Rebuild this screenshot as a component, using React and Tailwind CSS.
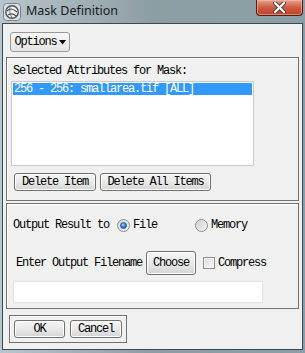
import React from "react";

const mono = { fontFamily: '"Liberation Mono", monospace' };

function Btn({ children, className = "" }) {
  return (
    <div
      className={
        "flex items-center justify-center rounded-[3px] border border-[#707070] bg-gradient-to-b from-[#f5f5f5] via-[#e9e9e9] to-[#d4d4d4] text-[12px] tracking-[-1.2px] text-black shadow-[inset_0_0_0_1px_#fcfcfc] " +
        className
      }
    >
      {children}
    </div>
  );
}

function Radio({ checked }) {
  return (
    <div className="flex h-[13px] w-[13px] items-center justify-center rounded-full border border-[#8a8a8a] bg-gradient-to-br from-[#d8d8d8] to-[#f8f8f8]">
      {checked ? (
        <div className="h-[7px] w-[7px] rounded-full border border-[#1c4f8a] bg-[radial-gradient(circle_at_40%_35%,#9fd8ff,#2a7bd4_55%,#0f4fa0)]" />
      ) : (
        <div className="h-[9px] w-[9px] rounded-full bg-gradient-to-br from-[#cfcfcf] to-[#f4f4f4]" />
      )}
    </div>
  );
}

export default function App() {
  return (
    <div
      className="flex h-[353px] w-[305px] flex-col bg-gradient-to-r from-[#b9c6cc] via-[#8d9ea3] to-[#8aa0a6]"
      style={mono}
    >
      {/* title bar */}
      <div className="relative flex h-[23px] items-center pl-[3px]">
        <svg width="18" height="18" viewBox="0 0 18 18">
          <rect x="0.5" y="0.5" width="17" height="17" rx="3" fill="#d9dee2" stroke="#7c8488" />
          <circle cx="9" cy="9" r="6.2" fill="#eef1f3" stroke="#4a5358" strokeWidth="1.4" />
          <path d="M4 8 C7 5 11 6 14 9" fill="none" stroke="#4a5358" strokeWidth="1.2" />
          <path d="M5 12 C8 10 11 11 13 13" fill="none" stroke="#4a5358" strokeWidth="1.1" />
          <path d="M7 4 C6 7 7 11 9 15" fill="none" stroke="#6a7378" strokeWidth="0.9" />
        </svg>
        <span
          className="ml-[5px] text-[12.5px] text-[#1a1a1a]"
          style={{ fontFamily: '"Noto Sans", sans-serif' }}
        >
          Mask Definition
        </span>
        <div className="absolute right-[2px] top-0 flex h-[16px] w-[47px] items-center justify-center rounded-b-[4px] border border-t-0 border-[#4e2018] bg-gradient-to-b from-[#e3a08e] via-[#cf5a40] to-[#c1412b] shadow-[inset_0_0_0_1px_rgba(255,200,180,0.5)]">
          <svg width="13" height="11" viewBox="0 0 13 11">
            <path
              d="M2 1 L11 10 M11 1 L2 10"
              stroke="#3a3f44"
              strokeWidth="4"
              strokeLinecap="round"
            />
            <path
              d="M2 1 L11 10 M11 1 L2 10"
              stroke="#ffffff"
              strokeWidth="2.2"
              strokeLinecap="round"
            />
          </svg>
        </div>
      </div>

      {/* client */}
      <div className="mx-[2px] mb-[3px] flex flex-1 flex-col border border-[#3c4a50] bg-[#f0f0f0] text-[12px] tracking-[-1.2px] text-black">
        <div className="pl-[7px] pt-[8px]">
          <div className="flex h-[20px] w-[60px] items-center justify-center gap-[2px] rounded-[3px] border border-[#9a9a9a] bg-gradient-to-b from-[#f7f7f7] to-[#e4e4e4]">
            <span>Options</span>
            <svg width="7" height="5" viewBox="0 0 7 5">
              <path d="M0 0 H7 L3.5 4.5 Z" fill="#000" />
            </svg>
          </div>
        </div>

        {/* panel 1 */}
        <div className="mx-[3px] mt-[5px] flex h-[144px] flex-col border border-[#707070] shadow-[inset_1px_1px_0_#ffffff]">
          <div className="pl-[6px] pt-[6px] leading-[14px]">Selected Attributes for Mask:</div>
          <div className="ml-[4px] mt-[3px] h-[85px] w-[243px] border border-[#c8cbd0] bg-white p-px">
            <div className="h-[12px] bg-[#3399ff] pl-[1px] leading-[12px] text-white">
              256 - 256: smallarea.tif [ALL]
            </div>
          </div>
          <div className="ml-[7px] mt-[7px] flex gap-[4px]">
            <Btn className="h-[18px] w-[82px]">Delete Item</Btn>
            <Btn className="h-[18px] w-[111px]">Delete All Items</Btn>
          </div>
        </div>

        {/* panel 2 */}
        <div className="mx-[3px] mt-[2px] flex h-[106px] flex-col border border-[#707070] shadow-[inset_1px_1px_0_#ffffff]">
          <div className="ml-[6px] mt-[14px] flex h-[14px] items-center">
            <span>Output Result to</span>
            <div className="ml-[8px]">
              <Radio checked />
            </div>
            <span className="ml-[3px]">File</span>
            <div className="ml-[38px]">
              <Radio />
            </div>
            <span className="ml-[3px]">Memory</span>
          </div>
          <div className="ml-[9px] mt-[19px] flex items-center">
            <span>Enter Output Filename</span>
            <Btn className="ml-[4px] h-[24px] w-[50px]">Choose</Btn>
            <div className="ml-[7px] h-[12px] w-[12px] border border-[#8f8f8f] bg-gradient-to-br from-[#dcdcdc] to-[#fafafa] shadow-[inset_0_0_0_1px_#f4f4f4]" />
            <span className="ml-[3px]">Compress</span>
          </div>
          <div className="ml-[6px] mt-[6px] h-[22px] w-[250px] border border-[#e0e2e5] bg-white" />
        </div>

        {/* panel 3 */}
        <div className="ml-[6px] mt-[6px] flex h-[28px] w-[118px] items-center gap-[5px] border border-[#707070] pl-[4px] shadow-[inset_1px_1px_0_#ffffff]">
          <Btn className="h-[18px] w-[51px]">OK</Btn>
          <Btn className="h-[18px] w-[52px]">Cancel</Btn>
        </div>
      </div>
    </div>
  );
}
